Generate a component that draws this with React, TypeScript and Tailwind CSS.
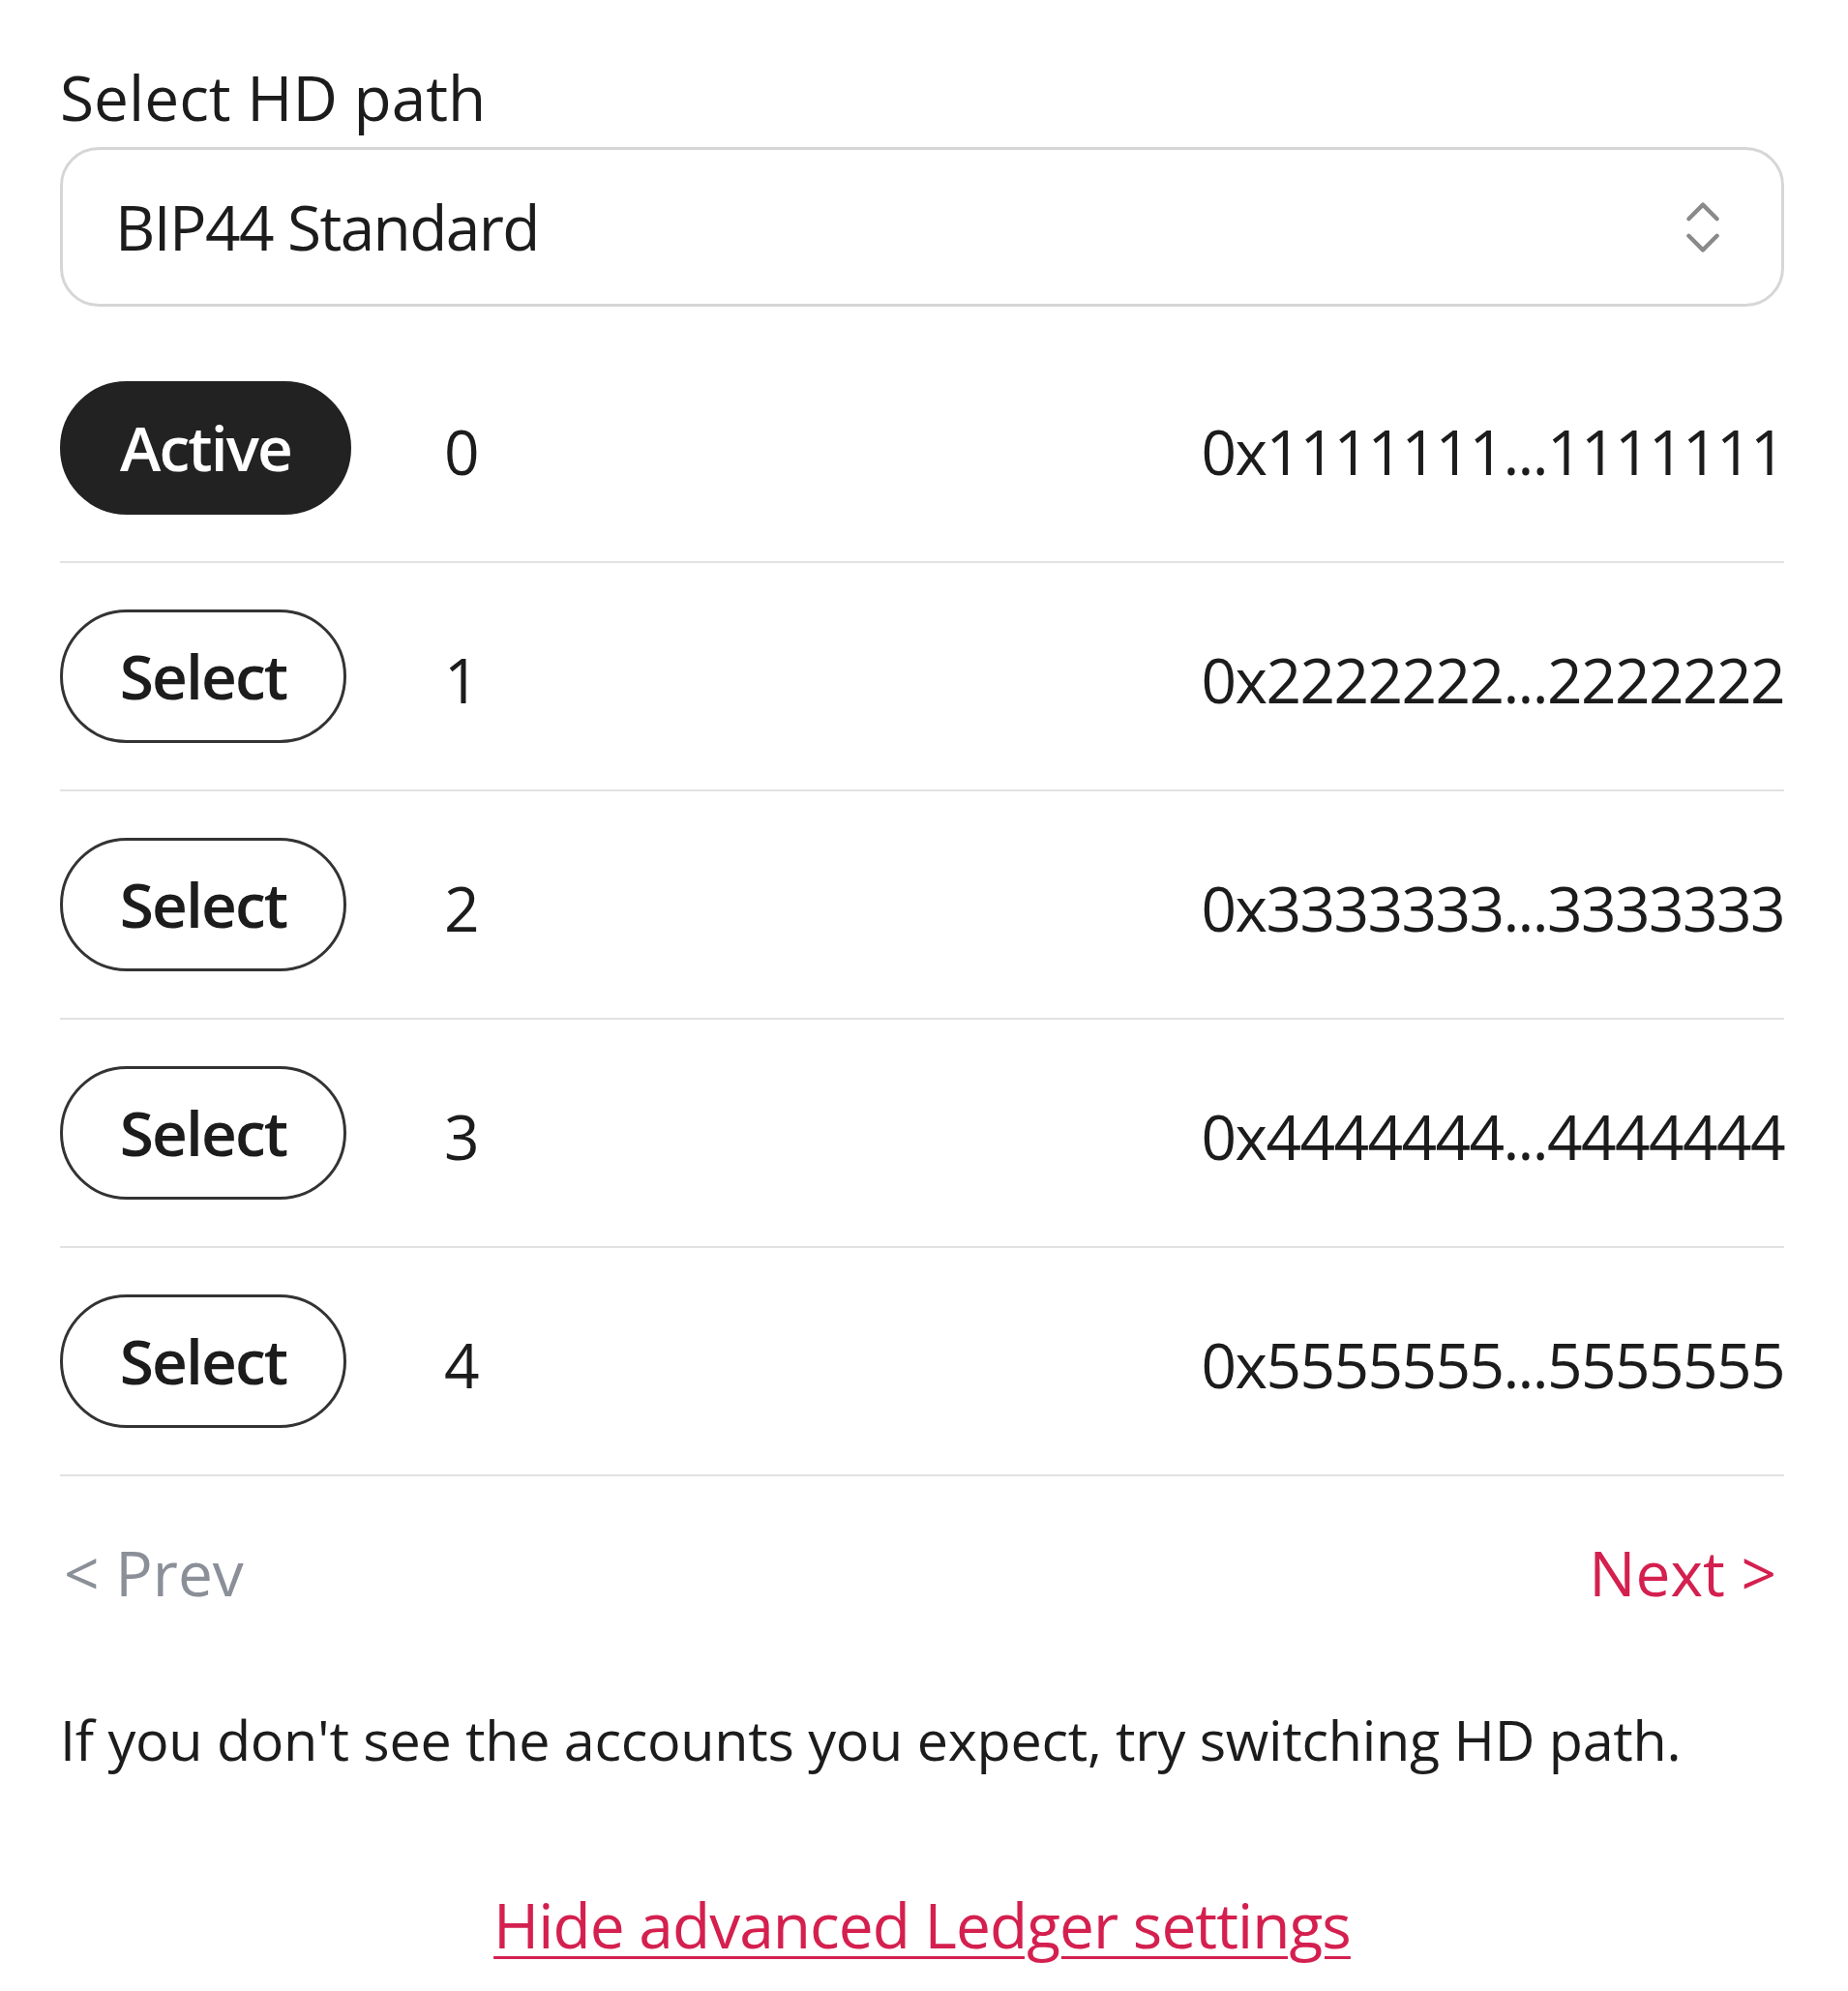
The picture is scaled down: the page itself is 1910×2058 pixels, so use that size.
import { ChevronsUpDown } from 'lucide-react'

const accounts = [
  { index: 0, address: '0x1111111...1111111', active: true },
  { index: 1, address: '0x2222222...2222222', active: false },
  { index: 2, address: '0x3333333...3333333', active: false },
  { index: 3, address: '0x4444444...4444444', active: false },
  { index: 4, address: '0x5555555...5555555', active: false },
]

export default function App() {
  return (
    <div
      className="min-h-screen bg-white pl-[62px] pr-[66px] pt-[53px] text-[#1c1c1c]"
      style={{ fontFamily: '"Open Sans", "Noto Sans", sans-serif' }}
    >
      <h2 className="text-[64px] leading-[96px] font-medium">Select HD path</h2>

      {/* HD path picker */}
      <div className="mt-[3px] h-[165px] rounded-[40px] border-[3px] border-[#d6d6d6] flex items-center justify-between pl-[54px] pr-[46px]">
        <span className="text-[64px] leading-[96px] tracking-[-0.025em]">BIP44 Standard</span>
        <ChevronsUpDown size={70} strokeWidth={1.5} className="text-[#8a8a8a]" />
      </div>

      {/* Account list */}
      <div className="mt-[29px]">
        {accounts.map((acc) => (
          <div
            key={acc.index}
            className="grid grid-cols-[397px_1fr_auto] items-center py-12 border-b-2 border-[#e2e2e2]"
          >
            <div>
              {acc.active ? (
                <button className="h-[138px] w-[301px] rounded-full border-[3px] border-[#222] bg-[#222] text-white text-[64px] font-semibold tracking-[-0.03em]">
                  Active
                </button>
              ) : (
                <button className="h-[138px] w-[296px] rounded-full border-[3px] border-[#333] bg-white text-[#1c1c1c] text-[64px] font-semibold tracking-[-0.03em]">
                  Select
                </button>
              )}
            </div>
            <span className="text-[64px] leading-[96px] pt-2">{acc.index}</span>
            <span className="text-[64px] leading-[96px] pt-2 tracking-[-0.025em]">{acc.address}</span>
          </div>
        ))}
      </div>

      {/* Pagination */}
      <div className="flex justify-between items-center pt-[52px] text-[64px] leading-[96px]">
        <button className="text-[#8a8f98] pl-1">&lt; Prev</button>
        <button className="text-[#d4204f] pr-2">Next &gt;</button>
      </div>

      <p className="mt-[82px] text-[57.5px] leading-[84px] tracking-[-0.005em]">
        If you don't see the accounts you expect, try switching HD path.
      </p>

      <div className="mt-[102px] text-center">
        <a
          href="#"
          className="text-[64px] leading-[96px] text-[#d4204f] underline decoration-[3px] underline-offset-[8px] tracking-[-0.015em]"
        >
          Hide advanced Ledger settings
        </a>
      </div>
    </div>
  )
}
